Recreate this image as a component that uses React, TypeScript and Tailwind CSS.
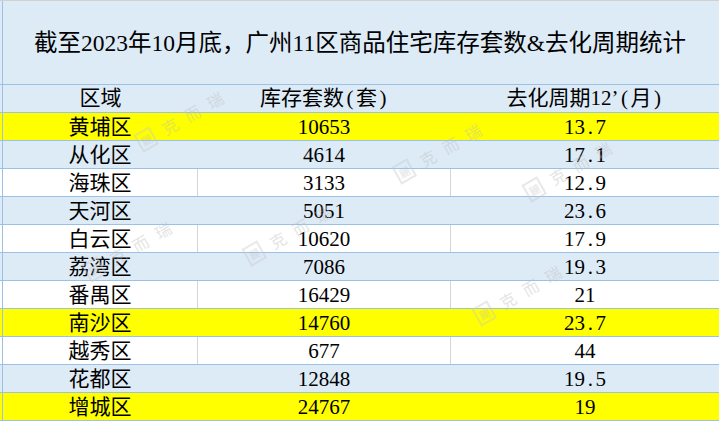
import React from "react";

type Row = { name: string; stock: string; cycle: string; tone: "y" | "b" | "w" };

const rows: Row[] = [
  { name: "黄埔区", stock: "10653", cycle: "13.7", tone: "y" },
  { name: "从化区", stock: "4614", cycle: "17.1", tone: "b" },
  { name: "海珠区", stock: "3133", cycle: "12.9", tone: "w" },
  { name: "天河区", stock: "5051", cycle: "23.6", tone: "b" },
  { name: "白云区", stock: "10620", cycle: "17.9", tone: "w" },
  { name: "荔湾区", stock: "7086", cycle: "19.3", tone: "b" },
  { name: "番禺区", stock: "16429", cycle: "21", tone: "w" },
  { name: "南沙区", stock: "14760", cycle: "23.7", tone: "y" },
  { name: "越秀区", stock: "677", cycle: "44", tone: "w" },
  { name: "花都区", stock: "12848", cycle: "19.5", tone: "b" },
  { name: "增城区", stock: "24767", cycle: "19", tone: "y" },
];

const font = { fontFamily: '"Liberation Serif", "Noto Sans CJK SC", serif' };

function Num({ v }: { v: string }) {
  const parts = v.split(".");
  if (parts.length === 1) return <span>{v}</span>;
  return (
    <span>
      {parts[0]}
      <span className="inline-block w-[10.5px] text-center">.</span>
      {parts[1]}
    </span>
  );
}

function Mark({ className }: { className: string }) {
  return (
    <div
      className={`absolute flex items-center gap-[10px] text-[16px] text-[#bdbdbd] opacity-40 -rotate-[30deg] pointer-events-none ${className}`}
      style={{ fontFamily: '"Noto Sans CJK SC", sans-serif' }}
    >
      <span className="inline-flex h-[20px] w-[18px] items-center justify-center border-2 border-[#c8c8c8] text-[11px]">
        麗
      </span>
      <span>克</span>
      <span>而</span>
      <span>瑞</span>
    </div>
  );
}

export default function App() {
  return (
    <div className="relative w-[719px] h-[421px] overflow-hidden bg-white text-black" style={font}>
      <div className="h-px bg-[#d0d0d0]" />
      {/* title */}
      <div className="flex h-[84px] border-b border-[#9bc2e6] bg-[#ddebf7]">
        <div className="w-[2px]" />
        <div className="w-px bg-[#9bc2e6]" />
        <div className="flex flex-1 items-center justify-center pt-[2px] pr-[2px] text-[23.5px] leading-none">
          截至2023年10月底，广州11区商品住宅库存套数&amp;去化周期统计
        </div>
      </div>
      {/* header */}
      <div className="flex h-[28px] border-b border-[#9bc2e6] bg-[#ddebf7] text-[21px] leading-[27px]">
        <div className="w-[2px]" />
        <div className="w-px bg-[#9bc2e6]" />
        <div className="w-[195px] text-center">区域</div>
        <div className="w-[253px] text-center">
          库存套数<span className="inline-block w-[12px] text-center">(</span>套<span className="inline-block w-[12px] text-center">)</span>
        </div>
        <div className="flex-1 text-center">
          去化周期12’<span className="inline-block w-[12px] text-center">(</span>月<span className="inline-block w-[12px] text-center">)</span>
        </div>
      </div>
      {rows.map((r) => {
        const bg = r.tone === "y" ? "bg-[#ffff00]" : r.tone === "b" ? "bg-[#ddebf7]" : "bg-white";
        const sep = r.tone === "w" ? "border-r border-[#d4d4d4]" : "border-r border-transparent";
        return (
          <div key={r.name} className={`flex h-[28px] border-b border-[#9bc2e6] text-[21px] leading-[27px] ${bg}`}>
            <div className="w-[2px]" />
            <div className="w-px bg-[#9bc2e6]" />
            <div className={`w-[195px] pt-px text-center ${sep}`}>{r.name}</div>
            <div className={`w-[253px] pt-px text-center ${sep}`}>
              <Num v={r.stock} />
            </div>
            <div className="flex-1 pt-px text-center">
              <Num v={r.cycle} />
            </div>
          </div>
        );
      })}
      <Mark className="left-[132px] top-[108px]" />
      <Mark className="left-[390px] top-[140px]" />
      <Mark className="left-[80px] top-[238px]" />
      <Mark className="left-[240px] top-[222px]" />
      <Mark className="left-[520px] top-[158px]" />
      <Mark className="left-[470px] top-[282px]" />
    </div>
  );
}
